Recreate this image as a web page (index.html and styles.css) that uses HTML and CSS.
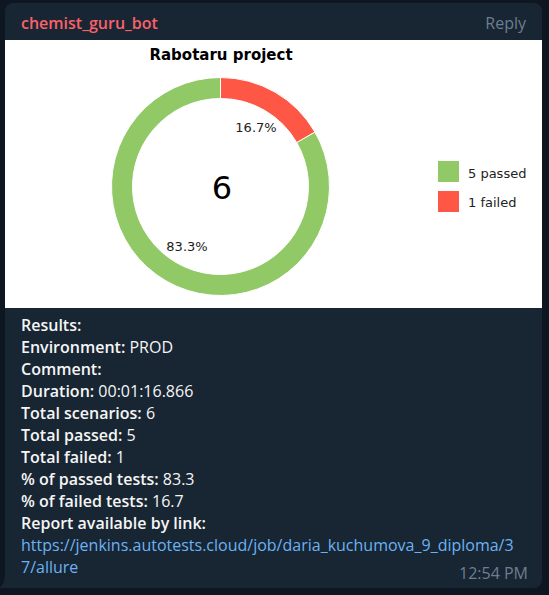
FILE: index.html
```html
<!DOCTYPE html>
<html lang="en">
<head>
<meta charset="utf-8">
<meta name="viewport" content="width=device-width, initial-scale=1">
<title>chemist_guru_bot</title>
<link rel="stylesheet" href="styles.css">
</head>
<body>
<article class="message">
  <header class="message-header">
    <a class="sender" href="#">chemist_guru_bot</a>
    <button class="reply" type="button">Reply</button>
  </header>
  <svg class="chart" viewBox="0 0 537 268" role="img" aria-label="Rabotaru project: 5 passed, 1 failed">
    <rect width="537" height="268" fill="#fff"/>
    <text class="chart-title" x="216" y="20">Rabotaru project</text>
    <g stroke="#fff" stroke-width="1">
      <path fill="#92c967" d="M309.900 92 A109 109 0 1 1 215.500 37.500 V58.500 A88 88 0 1 0 291.700 102.500 Z"/>
      <path fill="#ff5745" d="M215.500 37.500 A109 109 0 0 1 309.900 92 L291.700 102.500 A88 88 0 0 0 215.500 58.500 Z"/>
    </g>
    <text class="chart-label" x="251" y="92">16.7%</text>
    <text class="chart-label" x="182" y="211">83.3%</text>
    <text class="chart-total" x="217" y="159">6</text>
    <rect x="433" y="121" width="21" height="21" fill="#92c967"/>
    <rect x="433" y="151" width="21" height="21" fill="#ff5745"/>
    <text class="chart-legend" x="463" y="138">5 passed</text>
    <text class="chart-legend" x="463" y="167">1 failed</text>
  </svg>
  <div class="message-text">
    <div><b>Results:</b></div>
    <div><b>Environment:</b> PROD</div>
    <div><b>Comment:</b></div>
    <div><b>Duration:</b> 00:01:16.866</div>
    <div><b>Total scenarios:</b> 6</div>
    <div><b>Total passed:</b> 5</div>
    <div><b>Total failed:</b> 1</div>
    <div><b>% of passed tests:</b> 83.3</div>
    <div><b>% of failed tests:</b> 16.7</div>
    <div><b>Report available by link:</b></div>
    <a class="report-link" href="https://jenkins.autotests.cloud/job/daria_kuchumova_9_diploma/37/allure">https://jenkins.autotests.cloud/job/daria_kuchumova_9_diploma/3<wbr>7/allure</a>
  </div>
  <time class="sent-at">12:54 PM</time>
  <svg class="tail" viewBox="0 0 12 16" aria-hidden="true"><path fill="#182533" d="M5 0 C5 8 4 12 0 15 V16 H12 V0 Z"/></svg>
</article>
</body>
</html>
```
FILE: styles.css
```css
* {
  box-sizing: border-box;
}

body {
  margin: 0;
  padding: 3px 7px 7px 5px;
  background: #0e1621;
  color: #f5f5f5;
  font: 16px/22px "Open Sans", sans-serif;
}

.message {
  position: relative;
  padding-bottom: 10px;
  border-radius: 8px 8px 8px 0;
  background: #182533;
}

.message-header {
  display: flex;
  align-items: center;
  justify-content: space-between;
  height: 37px;
  padding: 3px 16px 0;
}

.sender {
  color: #fb6169;
  font-weight: 600;
  text-decoration: none;
}

.reply {
  padding: 0;
  border: 0;
  background: none;
  color: #6d7f8f;
  font: inherit;
  cursor: pointer;
}

.chart {
  display: block;
  width: 100%;
  font-family: "DejaVu Sans", sans-serif;
}

.chart-title,
.chart-label,
.chart-total {
  text-anchor: middle;
}

.chart-title {
  font-size: 15px;
  font-weight: 700;
}

.chart-label,
.chart-legend {
  font-size: 13px;
  fill: #222;
}

.chart-total {
  font-size: 32px;
}

.message-text {
  padding: 6px 16px 0;
}

.message-text b {
  font-weight: 600;
}

.report-link {
  color: #6ab3f3;
  text-decoration: none;
  word-break: break-all;
}

.sent-at {
  position: absolute;
  right: 14px;
  bottom: 4px;
  color: #6d7f8f;
}

.tail {
  position: absolute;
  left: -5px;
  bottom: 0;
  width: 12px;
  height: 16px;
}
```
